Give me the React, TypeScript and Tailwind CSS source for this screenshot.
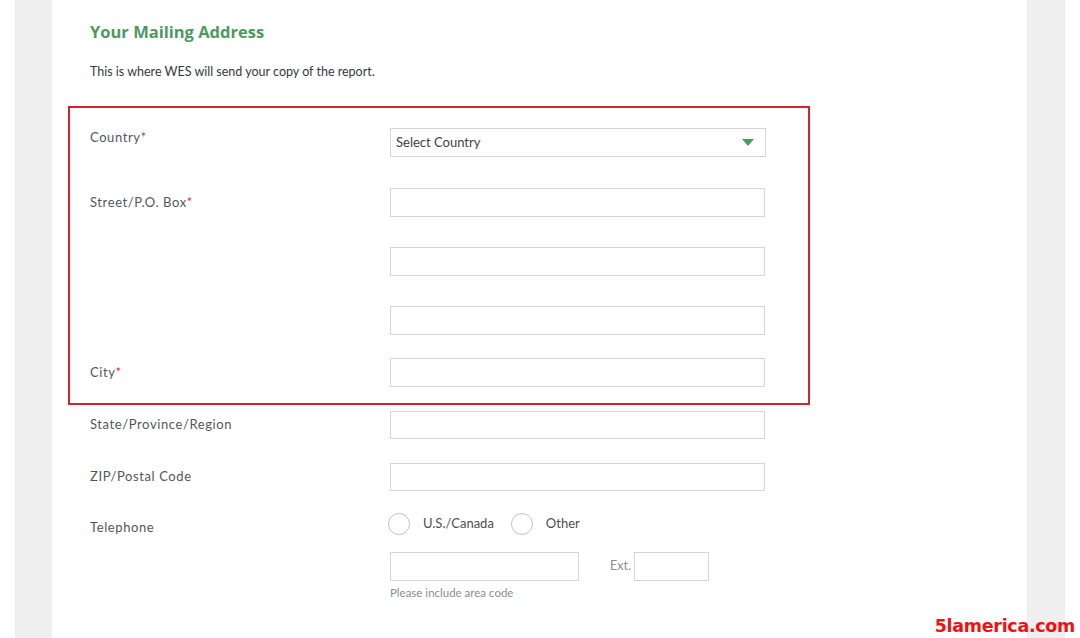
import React from 'react';

const labelCls =
  "w-[300px] shrink-0 text-[13px] tracking-[0.6px] text-[#51575d] [font-family:Lato,'Open_Sans',sans-serif]";
const inputCls = 'h-[29px] w-[375px] border border-[#d6d6d6] bg-white';

function Req() {
  return <span className="text-[#d0343c]">*</span>;
}

function Row({
  label,
  mt,
  children,
  labelOffset = '',
}: {
  label?: React.ReactNode;
  mt: string;
  children: React.ReactNode;
  labelOffset?: string;
}) {
  return (
    <div className={`flex items-center ${mt}`}>
      <div className={`relative ${labelCls} ${labelOffset}`}>{label}</div>
      {children}
    </div>
  );
}

function Radio({ label }: { label: string }) {
  return (
    <div className="flex items-center">
      <span className="h-[22px] w-[22px] rounded-full border-[1.5px] border-[#c4c4c4] bg-white" />
      <span className="ml-[13px] text-[13px] text-[#4a5058]">{label}</span>
    </div>
  );
}

export default function App() {
  return (
    <div className="relative flex h-[638px] w-[1080px] overflow-hidden bg-white [font-family:Lato,'Open_Sans',sans-serif]">
      <div className="w-[15px] shrink-0 bg-white" />
      <div className="w-[37px] shrink-0 bg-[#efefef]" />

      <main className="w-[975px] shrink-0 bg-white">
        <div className="pl-[38px] pt-[21px]">
          <h2 className="text-[16.5px] font-bold leading-[22px] text-[#4d9a5e] [font-family:'Open_Sans',sans-serif]">
            Your Mailing Address
          </h2>
          <p className="mt-[20px] text-[12.5px] leading-[18px] text-[#333a40]">
            This is where WES will send your copy of the report.
          </p>
        </div>

        {/* highlighted required block */}
        <section className="ml-[16px] mt-[25px] w-[742px] border-2 border-[#d3232c] pb-[16px] pl-[20px]">
          <Row
            mt="mt-[20px]"
            labelOffset="-top-[5px]"
            label={
              <>
                Country<Req />
              </>
            }
          >
            <div className="flex h-[29px] w-[376px] items-center justify-between border border-[#d6d6d6] bg-white pl-[5px] pr-[11px]">
              <span className="text-[13px] text-[#3d434a]">Select Country</span>
              <svg width="12" height="8" viewBox="0 0 12 8">
                <path d="M0 0 H12 L6 7 Z" fill="#4d9a5e" />
              </svg>
            </div>
          </Row>
          <Row
            mt="mt-[31px]"
            label={
              <>
                Street/P.O. Box<Req />
              </>
            }
          >
            <div className={inputCls} />
          </Row>
          <Row mt="mt-[30px]">
            <div className={inputCls} />
          </Row>
          <Row mt="mt-[30px]">
            <div className={inputCls} />
          </Row>
          <Row
            mt="mt-[23px]"
            label={
              <>
                City<Req />
              </>
            }
          >
            <div className={inputCls} />
          </Row>
        </section>

        <div className="pl-[38px]">
          <Row mt="mt-[6px]" label="State/Province/Region">
            <div className="h-[28px] w-[375px] border border-[#d6d6d6] bg-white" />
          </Row>
          <Row mt="mt-[24px]" label="ZIP/Postal Code">
            <div className="h-[28px] w-[375px] border border-[#d6d6d6] bg-white" />
          </Row>
          <Row mt="mt-[22px]" label="Telephone" labelOffset="top-[4px]">
            <div className="-ml-[2px] flex items-center gap-[17px]">
              <Radio label="U.S./Canada" />
              <Radio label="Other" />
            </div>
          </Row>
          <div className="mt-[17px] flex pl-[300px]">
            <div>
              <div className="flex items-center">
                <div className="h-[29px] w-[189px] border border-[#d6d6d6] bg-white" />
                <span className="ml-[31px] mt-[-1px] text-[12.5px] text-[#8a8f94]">Ext.</span>
                <div className="ml-[3px] h-[29px] w-[75px] border border-[#d6d6d6] bg-white" />
              </div>
              <p className="mt-[5px] text-[11.5px] leading-[14px] text-[#8a8f94]">Please include area code</p>
            </div>
          </div>
        </div>
      </main>

      <div className="w-[38px] shrink-0 bg-[#efefef]" />
      <div className="w-[15px] shrink-0 bg-white" />

      <div className="absolute bottom-[2px] right-[5px] text-[17.5px] font-bold leading-[20px] tracking-[-0.3px] text-[#ee1111] [font-family:'DejaVu_Sans',sans-serif]">
        5lamerica.com
      </div>
    </div>
  );
}
